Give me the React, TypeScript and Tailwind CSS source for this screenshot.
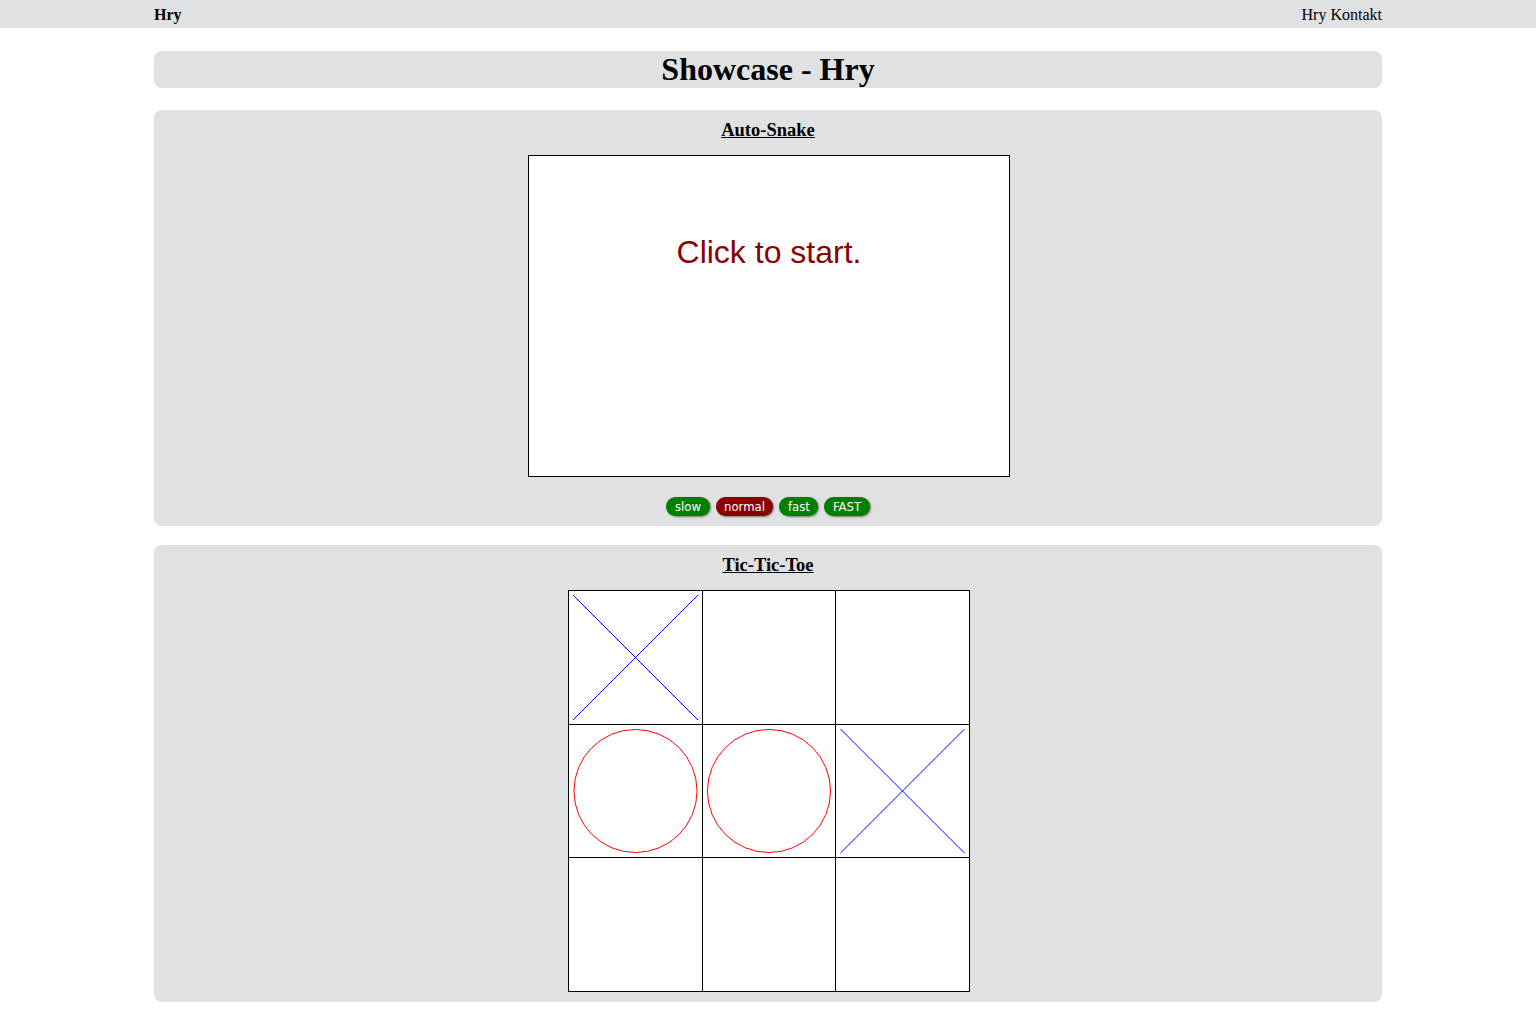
import { useState } from 'react';

type Mark = 'X' | 'O' | null;

const speeds = ['slow', 'normal', 'fast', 'FAST'];

function Cell({ mark }: { mark: Mark }) {
  return (
    <div className="bg-white w-full h-full">
      {mark === 'X' && (
        <svg viewBox="0 0 133 133" className="w-full h-full block">
          <g stroke="#0000ff" strokeWidth="1" fill="none">
            <line x1="4" y1="4" x2="129" y2="129" />
            <line x1="129" y1="4" x2="4" y2="129" />
          </g>
        </svg>
      )}
      {mark === 'O' && (
        <svg viewBox="0 0 133 133" className="w-full h-full block">
          <circle cx="66.5" cy="66.5" r="62" fill="none" stroke="#ff0000" strokeWidth="1" />
        </svg>
      )}
    </div>
  );
}

export default function App() {
  const [speed, setSpeed] = useState('normal');
  const [board] = useState<Mark[]>(['X', null, null, 'O', 'O', 'X', null, null, null]);

  return (
    <div className="min-h-[1021px] bg-white font-['Liberation_Serif',serif] text-black">
      <nav className="h-[28px] bg-[#e0e1e3]">
        <div className="w-[1228px] mx-auto flex justify-between items-center h-full text-[16px] leading-none pt-[2px]">
          <span className="font-bold">Hry</span>
          <span>Hry Kontakt</span>
        </div>
      </nav>

      <main className="w-[1228px] mx-auto">
        <div className="mt-[23px] h-[37px] rounded-lg bg-[#e0e1e3] flex items-center justify-center">
          <h1 className="text-[32px] font-bold leading-none pb-[1px]">Showcase - Hry</h1>
        </div>

        <section className="mt-[22px] h-[416px] rounded-lg bg-[#e0e1e3] flex flex-col items-center pt-[8px]">
          <h2 className="text-[18.5px] font-bold underline leading-[24px]">Auto-Snake</h2>
          <div className="ml-[2px] mt-[13px] w-[482px] h-[322px] border border-black bg-white flex justify-center">
            <p className="mt-[80px] font-['Liberation_Sans',Arial,sans-serif] text-[32px] leading-none text-[#8b0000]">
              Click to start.
            </p>
          </div>
          <div className="mt-[20px] flex gap-[6px]">
            {speeds.map((s) => (
              <button
                key={s}
                onClick={() => setSpeed(s)}
                className={`h-[19px] px-[8.5px] rounded-full text-white text-[13px] leading-none font-['DejaVu_Sans_Condensed','DejaVu_Sans',sans-serif] shadow-[1px_1px_2px_#777] ${
                  speed === s ? 'bg-[#8b0000]' : 'bg-[#008000]'
                }`}
              >
                {s}
              </button>
            ))}
          </div>
        </section>

        <section className="mt-[19px] h-[457px] rounded-lg bg-[#e0e1e3] flex flex-col items-center pt-[8px]">
          <h2 className="text-[18.5px] font-bold underline leading-[24px]">Tic-Tic-Toe</h2>
          <div className="ml-[2px] mt-[13px] grid grid-cols-[133px_132px_133px] grid-rows-[133px_132px_133px] gap-px p-px bg-black">
            {board.map((m, i) => (
              <Cell key={i} mark={m} />
            ))}
          </div>
        </section>
      </main>
    </div>
  );
}
